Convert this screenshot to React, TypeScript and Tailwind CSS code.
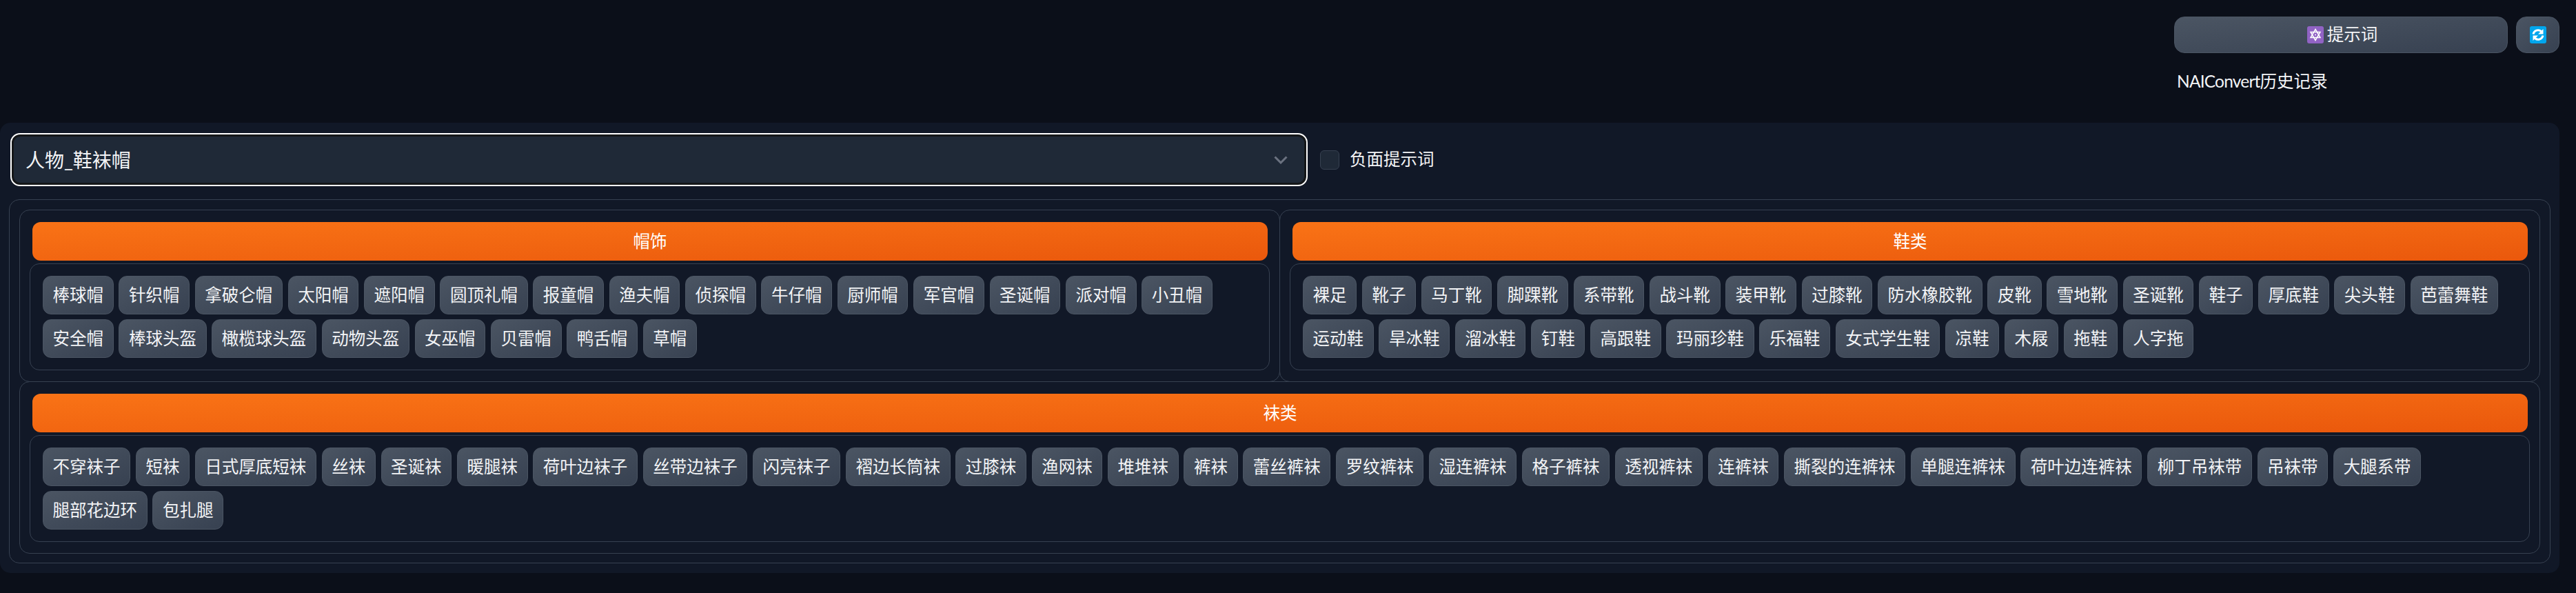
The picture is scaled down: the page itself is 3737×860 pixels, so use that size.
const hats = [
  "棒球帽", "针织帽", "拿破仑帽", "太阳帽", "遮阳帽", "圆顶礼帽", "报童帽", "渔夫帽", "侦探帽", "牛仔帽", "厨师帽", "军官帽", "圣诞帽", "派对帽", "小丑帽",
  "安全帽", "棒球头盔", "橄榄球头盔", "动物头盔", "女巫帽", "贝雷帽", "鸭舌帽", "草帽",
];

const shoes = [
  "裸足", "靴子", "马丁靴", "脚踝靴", "系带靴", "战斗靴", "装甲靴", "过膝靴", "防水橡胶靴", "皮靴", "雪地靴", "圣诞靴", "鞋子", "厚底鞋", "尖头鞋", "芭蕾舞鞋",
  "运动鞋", "旱冰鞋", "溜冰鞋", "钉鞋", "高跟鞋", "玛丽珍鞋", "乐福鞋", "女式学生鞋", "凉鞋", "木屐", "拖鞋", "人字拖",
];

const socks = [
  "不穿袜子", "短袜", "日式厚底短袜", "丝袜", "圣诞袜", "暖腿袜", "荷叶边袜子", "丝带边袜子", "闪亮袜子", "褶边长筒袜", "过膝袜", "渔网袜", "堆堆袜", "裤袜", "蕾丝裤袜", "罗纹裤袜", "湿连裤袜", "格子裤袜", "透视裤袜", "连裤袜", "撕裂的连裤袜", "单腿连裤袜", "荷叶边连裤袜", "柳丁吊袜带", "吊袜带", "大腿系带",
  "腿部花边环", "包扎腿",
];

const Chip: React.FC<{ label: string }> = ({ label }) => (
  <button className="h-[56px] rounded-[12px] border border-[#4b5563] bg-gradient-to-br from-[#4b5563] to-[#374151] px-[13.6px] text-[24.5px] text-[#f3f4f6]">
    {label}
  </button>
);

const Section: React.FC<{ title: string; items: string[]; className: string }> = ({ title, items, className }) => (
  <div className={`rounded-[15px] border border-[#374151] pt-[17px] pr-[14px] pb-[15px] pl-[14px] ${className}`}>
    <div className="mr-[3px] ml-[4px] flex h-[56px] items-center justify-center rounded-[12px] bg-gradient-to-br from-[#f97316] to-[#ea580c] text-[24.5px] text-white">
      {title}
    </div>
    <div className="mt-[4px] flex flex-wrap content-start gap-x-[7.7px] gap-y-[7px] rounded-[14px] border border-[#374151] px-[18px] py-[17px]">
      {items.map((item) => (
        <Chip key={item} label={item} />
      ))}
    </div>
  </div>
);

export default function App() {
  return (
    <div className="flex h-[860px] flex-col overflow-hidden bg-[#0b0f19] pt-[24px] pr-[24px] font-['Lato','Noto_Sans_CJK_SC',sans-serif] text-[#f3f4f6]">
      <div className="flex justify-end gap-[12px]">
        <button className="flex h-[53px] w-[484px] items-center justify-center gap-[5px] rounded-[15px] border border-[#4b5563] bg-gradient-to-br from-[#4b5563] to-[#374151] pl-[4px] text-[24.5px]">
          {/* emoji drawn by hand, no colour emoji font here */}
          <svg viewBox="0 0 24 25" className="h-[25px] w-[24px]">
            <rect width="24" height="25" rx="3" fill="#9163c4" />
            <path d="M12 4.5 19 16.5H5ZM12 20.5 5 8.5H19Z" fill="none" stroke="#fff" strokeWidth="1.5" />
            <circle cx="12" cy="12.5" r="1" fill="#fff" />
          </svg>
          提示词
        </button>
        <button className="flex h-[53px] w-[63px] items-center justify-center rounded-[15px] border border-[#4b5563] bg-gradient-to-br from-[#4b5563] to-[#374151]">
          <svg viewBox="0 0 24 25" className="h-[25px] w-[24px]">
            <rect width="24" height="25" rx="3" fill="#00a6ed" />
            <path d="M5 11.5A7 7 0 0 1 16.5 7.5" fill="none" stroke="#fff" strokeWidth="3" />
            <path d="M19 13.5A7 7 0 0 1 7.5 17.5" fill="none" stroke="#fff" strokeWidth="3" />
            <path d="M19.5 4V11.5H12Z" fill="#fff" />
            <path d="M4.5 21V13.5H12Z" fill="#fff" />
          </svg>
        </button>
      </div>
      <div className="mt-[26px] ml-[3158px] text-[24.5px] leading-[30px]">
        <span className="tracking-[-0.8px]">NAIConvert</span>历史记录
      </div>

      <div className="mt-[45px] h-[653px] rounded-[15px] bg-[#111827] px-[13px] pt-[15px]">
        <div className="flex items-center">
          <div className="ml-[2px] flex h-[77px] w-[1882px] items-center justify-between rounded-[14px] border-[5px] border-[#151719] bg-[#1f2937] pr-[24px] pl-[17px] text-[28px] outline-2 -outline-offset-2 outline-white">
            人物_鞋袜帽
            <svg viewBox="0 0 20 12" className="h-[12px] w-[20px]">
              <path d="M1.5 1.5 10 10 18.5 1.5" fill="none" stroke="#6b7280" strokeWidth="3" />
            </svg>
          </div>
          <span className="ml-[18px] h-[28px] w-[28px] rounded-[6px] border border-[#374151] bg-[#1f2937]" />
          <span className="ml-[15px] text-[24.5px]">负面提示词</span>
        </div>

        <div className="mt-[19px] h-[528px] rounded-[15px] border border-[#374151] px-[14px] pt-[14px]">
          <div className="flex">
            <Section title="帽饰" items={hats} className="h-[250px] flex-1" />
            <Section title="鞋类" items={shoes} className="-ml-px h-[250px] flex-1" />
          </div>
          <Section title="袜类" items={socks} className="-mt-px h-[250px]" />
        </div>
      </div>
    </div>
  );
}
